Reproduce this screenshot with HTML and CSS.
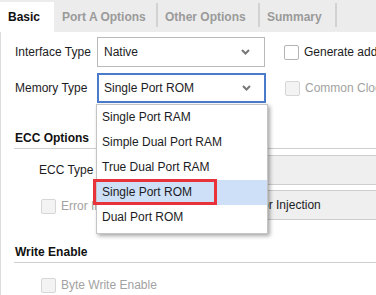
FILE: index.html
```html
<!DOCTYPE html>
<html lang="en">

<head>
    <meta charset="UTF-8">
    <meta name="viewport" content="width=device-width, initial-scale=1.0">
    <title>Block Memory Generator</title>
    <link rel="stylesheet" href="styles.css">
</head>

<body>
    <div class="tabs">
        <div class="tab tab-basic active">Basic</div>
        <div class="tab tab-porta">Port A Options</div>
        <div class="tab tab-other">Other Options</div>
        <div class="tab tab-summary">Summary</div>
    </div>

    <div class="panel">
        <div class="form-row">
            <label class="label">Interface Type</label>
            <div class="select">
                <span>Native</span>
                <svg class="chevron" width="9" height="6" viewBox="0 0 9 6"><path d="M1 1 L4.5 4.5 L8 1" fill="none" stroke="#777" stroke-width="2"/></svg>
            </div>
            <div class="check">
                <span class="box"></span>
                <span>Generate address interface with 32 bits</span>
            </div>
        </div>

        <div class="form-row">
            <label class="label">Memory Type</label>
            <div class="select focused">
                <span>Single Port ROM</span>
                <svg class="chevron" width="9" height="6" viewBox="0 0 9 6"><path d="M1 1 L4.5 4.5 L8 1" fill="none" stroke="#777" stroke-width="2"/></svg>
            </div>
            <div class="check disabled">
                <span class="box"></span>
                <span>Common Clock</span>
            </div>
        </div>

        <div class="group group-ecc">
            <h3 class="group-title">ECC Options</h3>
            <div class="group-row ecc-row">
                <label class="label-sub">ECC Type</label>
                <div class="field">No ECC</div>
            </div>
            <div class="group-row err-row">
                <div class="check disabled">
                    <span class="box"></span>
                    <span>Error Injection Pins</span>
                </div>
                <div class="field err-field">Single Bit Error Injection</div>
            </div>
        </div>

        <div class="group group-we">
            <h3 class="group-title">Write Enable</h3>
            <div class="group-row we-row">
                <div class="check disabled">
                    <span class="box"></span>
                    <span>Byte Write Enable</span>
                </div>
            </div>
        </div>

        <ul class="popup">
            <li>Single Port RAM</li>
            <li>Simple Dual Port RAM</li>
            <li>True Dual Port RAM</li>
            <li class="selected">Single Port ROM</li>
            <li>Dual Port ROM</li>
        </ul>
    </div>
</body>

</html>
```

FILE: styles.css
```css
body {
    margin: 0;
    font-family: 'Liberation Sans', Arial, sans-serif;
    font-size: 12px;
    color: #1c1c24;
    background: #fff;
    width: 376px;
    height: 295px;
    overflow: hidden;
    white-space: nowrap;
}

.tabs {
    display: flex;
    height: 32px;
    background: #ececec;
    box-sizing: border-box;
    padding-top: 2px;
}

.tab {
    position: relative;
    flex-shrink: 0;
    box-sizing: border-box;
    height: 30px;
    line-height: 30px;
    padding-left: 8px;
    font-weight: bold;
    color: #9a9a9a;
}

.tab::after {
    content: '';
    position: absolute;
    right: -1px;
    top: 1px;
    height: 24px;
    width: 2px;
    background: #d2d2d2;
}

.tab.active {
    background: #fff;
    color: #111;
}

.tab.active::after {
    display: none;
}

.tab-basic {
    width: 54px;
}

.tab-porta {
    width: 103px;
}

.tab-other {
    width: 102px;
}

.tab-summary {
    width: 77px;
}

.panel {
    position: relative;
    height: 263px;
    border-left: 1px solid #dcdcdc;
    box-sizing: border-box;
    padding-top: 5px;
}

.form-row {
    display: flex;
    align-items: center;
    height: 30px;
    padding-left: 14px;
    margin-bottom: 6px;
}

.label {
    flex-shrink: 0;
    width: 82px;
}

.select {
    flex-shrink: 0;
    display: flex;
    align-items: center;
    justify-content: space-between;
    box-sizing: border-box;
    width: 168px;
    height: 30px;
    border: 1px solid #b9b9b9;
    padding: 0 14px 0 6px;
}

.select.focused {
    width: 169px;
    border: 2px solid #4a7bcb;
    padding: 0 13px 0 5px;
}

.chevron {
    display: block;
}

.check {
    flex-shrink: 0;
    display: flex;
    align-items: center;
    gap: 5px;
    margin-left: 19px;
}

.box {
    flex-shrink: 0;
    width: 13px;
    height: 13px;
    border: 1px solid #b4b4b4;
    border-radius: 2px;
    background: #fff;
}

.check.disabled {
    color: #a2a2a2;
}

.check.disabled .box {
    border-color: #d6d6d6;
    background: #f3f3f3;
}

.group {
    padding-left: 13px;
}

.group-ecc {
    margin-top: 25px;
}

.group-we {
    margin-top: 22px;
}

.group-title {
    margin: 0;
    font-size: 12px;
    font-weight: bold;
    height: 20px;
    line-height: 20px;
    padding-left: 1px;
    border-bottom: 1px solid #cfcfcf;
    color: #111;
}

.group-row {
    display: flex;
    align-items: center;
    height: 30px;
}

.ecc-row {
    margin-top: 6px;
}

.label-sub {
    flex-shrink: 0;
    padding-left: 25px;
    width: 59px;
}

.field {
    flex: 1;
    height: 28px;
    line-height: 28px;
    background: #efefef;
    border-top: 1px solid #cdcdcd;
    border-bottom: 1px solid #cdcdcd;
    padding-left: 6px;
}

.err-row {
    margin-top: 5px;
}

.err-row .check {
    margin-left: 27px;
    width: 150px;
    padding-top: 2px;
}

.err-field {
    padding-left: 1px;
}

.we-row {
    margin-top: 7px;
}

.we-row .check {
    margin-left: 27px;
}

.popup {
    position: absolute;
    left: 95px;
    top: 72px;
    width: 170px;
    margin: 0;
    padding: 0 0 3px;
    list-style: none;
    background: #fff;
    border: 1px solid #c4c4c4;
    box-shadow: 2px 2px 4px rgba(0, 0, 0, 0.35);
}

.popup li {
    position: relative;
    height: 25px;
    line-height: 25px;
    padding-left: 5px;
}

.popup li.selected {
    background: #cde0f7;
}

.popup li.selected::after {
    content: '';
    position: absolute;
    left: -4px;
    top: -1px;
    width: 118px;
    height: 20px;
    border: 3px solid #e8333a;
}
```
